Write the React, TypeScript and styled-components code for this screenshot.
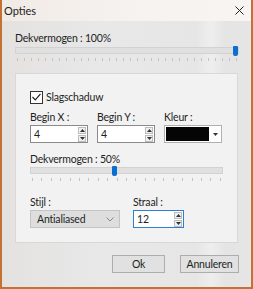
import styled, { createGlobalStyle } from "styled-components";

const GlobalStyle = createGlobalStyle`
  html, body {
    margin: 0;
    padding: 0;
    background: #c8722e;
  }
  body {
    font-family: Lato, "Noto Sans", sans-serif;
    font-size: 10.5px;
    letter-spacing: -0.2px;
    color: #1e1e1e;
  }
`;

const Window = styled.div`
  width: 253px;
  height: 289px;
  box-sizing: border-box;
  border: 2px solid #c47234;
  border-top: none;
  display: flex;
  flex-direction: column;
  background: #e7e7e7;
`;

const TitleBar = styled.div`
  height: 21px;
  flex: none;
  display: flex;
  align-items: center;
  justify-content: space-between;
  padding: 0 7px 0 2px;
  background: linear-gradient(90deg, #f1ebe6 0%, #f6f3f1 60%, #f7f4f2 100%);
  color: #222;
  font-size: 11px;
  letter-spacing: 0;
`;

const Body = styled.div`
  flex: 1;
  display: flex;
  flex-direction: column;
  padding: 11px 12px 0 13px;
  background: linear-gradient(90deg, #e4e2e1 0%, #e8e8e8 40%, #e6e6e6 78%, #eeeeee 84%, #e4e4e4 90%, #e6e6e6 100%);
`;

const Label = styled.div`
  height: 13px;
  line-height: 13px;
  white-space: nowrap;
`;

const SliderWrap = styled.div<{ $width: number; $top: number }>`
  position: relative;
  width: ${(p) => p.$width}px;
  height: 15px;
  margin-top: ${(p) => p.$top}px;
`;

const Track = styled.div`
  height: 5px;
  background: #e0e0e0;
  border: 1px solid #d2d2d2;
`;

const Thumb = styled.div`
  position: absolute;
  top: -1px;
  width: 5px;
  height: 10px;
  background: #0a6fd0;
  border-radius: 1px 1px 2px 2px;
`;

const Ticks = styled.div`
  margin-top: 4px;
  display: flex;
  justify-content: space-between;
  padding: 0 2px;
`;

const Tick = styled.span`
  width: 1px;
  height: 3px;
  background: #cbbfbb;
`;

const Panel = styled.div`
  margin-top: 11px;
  width: 223px;
  height: 170px;
  box-sizing: border-box;
  border: 1px solid #d8d8d8;
  background: #f2f2f2;
  padding: 16px 0 0 14px;
`;

const CheckRow = styled.label`
  display: flex;
  align-items: center;
  gap: 3px;
  height: 14px;
`;

const CheckBox = styled.span`
  width: 11px;
  height: 11px;
  border: 1px solid #333;
  background: #fff;
  display: flex;
  align-items: center;
  justify-content: center;
`;

const FieldRow = styled.div`
  margin-top: 7px;
  display: flex;
  gap: 9px;
`;

const Field = styled.div<{ $width: number }>`
  width: ${(p) => p.$width}px;
  display: flex;
  flex-direction: column;
  gap: 1px;
`;

const Spin = styled.div<{ $focus?: boolean }>`
  height: 18px;
  box-sizing: border-box;
  border: 1px solid ${(p) => (p.$focus ? "#2d7fd3" : "#8a8a8a")};
  background: #fff;
  display: flex;
  align-items: center;
  justify-content: space-between;
  padding-left: 3px;
`;

const SpinButtons = styled.div`
  display: flex;
  flex-direction: column;
  gap: 1px;
  padding: 0 1px;
`;

const SpinButton = styled.span`
  width: 8px;
  height: 7px;
  border: 1px solid #bcbcbc;
  background: #f0f0f0;
  display: flex;
  align-items: center;
  justify-content: center;
  box-sizing: border-box;
`;

const ColorBox = styled.div`
  height: 18px;
  box-sizing: border-box;
  border: 1px solid #b0b0b0;
  background: #fff;
  display: flex;
  align-items: center;
  padding-left: 1px;
`;

const Swatch = styled.div`
  width: 43px;
  height: 14px;
  background: #050505;
`;

const ColorArrow = styled.div`
  flex: 1;
  display: flex;
  align-items: center;
  justify-content: center;
  height: 100%;
`;

const SliderSection = styled.div`
  margin-top: 10px;
`;

const BottomRow = styled.div`
  margin-top: 14px;
  display: flex;
  gap: 13px;
`;

const Combo = styled.div`
  height: 18px;
  box-sizing: border-box;
  border: 1px solid #c4c4c4;
  background: #dedede;
  display: flex;
  align-items: center;
  justify-content: space-between;
  padding: 0 5px 0 6px;
`;

const Footer = styled.div`
  margin-top: 12px;
  display: flex;
  justify-content: flex-end;
  gap: 15px;
`;

const Button = styled.div<{ $width: number }>`
  width: ${(p) => p.$width}px;
  height: 18px;
  box-sizing: border-box;
  border: 1px solid #adadad;
  background: #e1e1e1;
  display: flex;
  align-items: center;
  justify-content: center;
`;

const UpArrow = () => (
  <svg width="5" height="3" viewBox="0 0 5 3">
    <path d="M2.5 0 L5 3 L0 3 Z" fill="#333" />
  </svg>
);

const DownArrow = () => (
  <svg width="5" height="3" viewBox="0 0 5 3">
    <path d="M0 0 L5 0 L2.5 3 Z" fill="#333" />
  </svg>
);

function Slider({ width, value, ticks, top }: { width: number; value: number; ticks: number; top: number }) {
  return (
    <SliderWrap $width={width} $top={top}>
      <Track />
      <Thumb style={{ left: Math.round((width - 6) * value) }} />
      <Ticks>
        {Array.from({ length: ticks }).map((_, i) => (
          <Tick key={i} />
        ))}
      </Ticks>
    </SliderWrap>
  );
}

function SpinBox({ value, focus }: { value: string; focus?: boolean }) {
  return (
    <Spin $focus={focus}>
      <span>{value}</span>
      <SpinButtons>
        <SpinButton>
          <UpArrow />
        </SpinButton>
        <SpinButton>
          <DownArrow />
        </SpinButton>
      </SpinButtons>
    </Spin>
  );
}

export default function App() {
  return (
    <>
      <GlobalStyle />
      <Window>
        <TitleBar>
          <span>Opties</span>
          <svg width="9" height="9" viewBox="0 0 9 9">
            <path d="M0.5 0.5 L8.5 8.5 M8.5 0.5 L0.5 8.5" stroke="#222" strokeWidth="1" />
          </svg>
        </TitleBar>
        <Body>
          <Label>Dekvermogen : 100%</Label>
          <Slider width={224} value={1} ticks={32} top={2} />
          <Panel>
            <CheckRow>
              <CheckBox>
                <svg width="9" height="8" viewBox="0 0 9 8">
                  <path d="M0.5 4 L3.3 6.8 L8.5 0.8" stroke="#222" strokeWidth="1.2" fill="none" />
                </svg>
              </CheckBox>
              <span>Slagschaduw</span>
            </CheckRow>
            <FieldRow>
              <Field $width={58}>
                <Label>Begin X :</Label>
                <SpinBox value="4" />
              </Field>
              <Field $width={58}>
                <Label>Begin Y :</Label>
                <SpinBox value="4" />
              </Field>
              <Field $width={58}>
                <Label>Kleur :</Label>
                <ColorBox>
                  <Swatch />
                  <ColorArrow>
                    <DownArrow />
                  </ColorArrow>
                </ColorBox>
              </Field>
            </FieldRow>
            <SliderSection>
              <Label>Dekvermogen : 50%</Label>
              <Slider width={193} value={0.44} ticks={21} top={1} />
            </SliderSection>
            <BottomRow>
              <Field $width={90}>
                <Label>Stijl :</Label>
                <Combo>
                  <span>Antialiased</span>
                  <svg width="8" height="5" viewBox="0 0 8 5">
                    <path d="M0.5 0.5 L4 4 L7.5 0.5" stroke="#888" strokeWidth="1" fill="none" />
                  </svg>
                </Combo>
              </Field>
              <Field $width={51}>
                <Label>Straal :</Label>
                <SpinBox value="12" focus />
              </Field>
            </BottomRow>
          </Panel>
          <Footer>
            <Button $width={53}>Ok</Button>
            <Button $width={59}>Annuleren</Button>
          </Footer>
        </Body>
      </Window>
    </>
  );
}
